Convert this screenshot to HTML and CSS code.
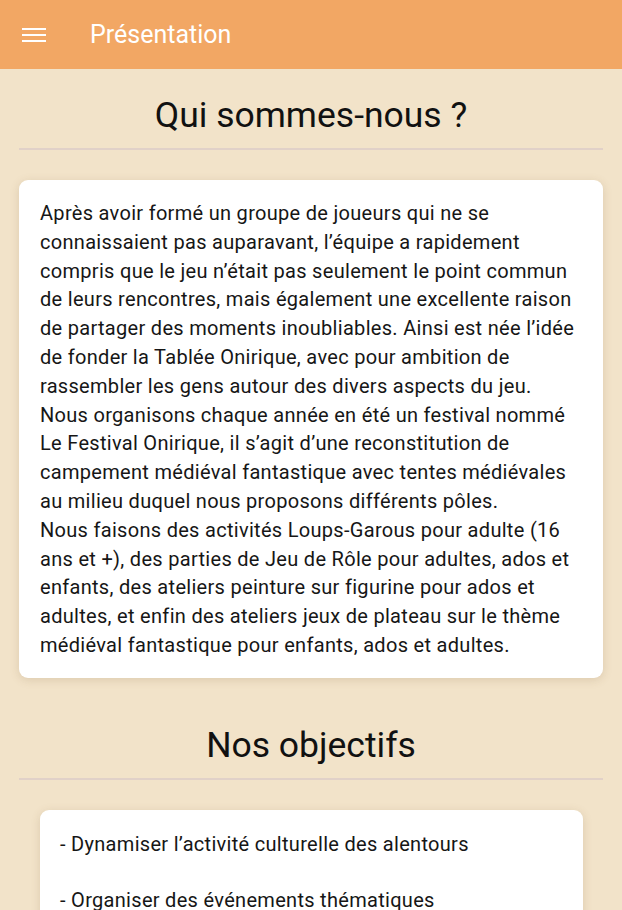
FILE: index.html
```html
<!DOCTYPE html>
<html lang="fr">
<head>
<meta charset="utf-8">
<title>Présentation</title>
<link rel="stylesheet" href="styles.css">
</head>
<body>
<header class="topbar">
  <button class="menu-btn" aria-label="Menu">
    <svg width="24" height="24" viewBox="0 0 24 24"><path d="M0 5h24v2H0zM0 11h24v2H0zM0 17h24v2H0z" fill="#fff"/></svg>
  </button>
  <h1 class="topbar-title">Présentation</h1>
</header>
<main class="page">
  <section class="section">
    <h2 class="section-title">Qui sommes-nous ?</h2>
    <div class="divider"></div>
    <div class="card card-wide">
      <p class="card-text">Après avoir formé un groupe de joueurs qui ne se connaissaient pas auparavant, l’équipe a rapidement compris que le jeu n’était pas seulement le point commun de leurs rencontres, mais également une excellente raison de partager des moments inoubliables. Ainsi est née l’idée de fonder la Tablée Onirique, avec pour ambition de rassembler les gens autour des divers aspects du jeu.<br>Nous organisons chaque année en été un festival nommé Le Festival Onirique, il s’agit d’une reconstitution de campement médiéval fantastique avec tentes médiévales au milieu duquel nous proposons différents pôles.<br>Nous faisons des activités Loups-Garous pour adulte (16 ans et +), des parties de Jeu de Rôle pour adultes, ados et enfants, des ateliers peinture sur figurine pour ados et adultes, et enfin des ateliers jeux de plateau sur le thème médiéval fantastique pour enfants, ados et adultes.</p>
    </div>
  </section>
  <section class="section section-second">
    <h2 class="section-title">Nos objectifs</h2>
    <div class="divider"></div>
    <div class="card card-narrow">
      <p class="card-text">- Dynamiser l’activité culturelle des alentours</p>
      <p class="card-text">- Organiser des événements thématiques</p>
    </div>
  </section>
</main>
</body>
</html>
```
FILE: styles.css
```css
* { box-sizing: border-box; }
html, body {
  margin: 0;
  padding: 0;
  background: #F2E3C9;
  font-family: Roboto, "Noto Sans", sans-serif;
  color: #1c1c1c;
}
body { height: 910px; overflow: hidden; }
.topbar {
  height: 69px;
  background: #F2A764;
  display: flex;
  align-items: center;
  padding-left: 22px;
}
.menu-btn {
  background: none;
  border: 0;
  padding: 0;
  width: 24px;
  height: 24px;
  display: flex;
  align-items: center;
  justify-content: center;
}
.topbar-title {
  margin: 0 0 0 44px;
  color: #fff;
  font-size: 25px;
  font-weight: 400;
  line-height: 1;
}
.page {
  padding: 0 19px;
}
.section { padding-top: 26px; }
.section-second { padding-top: 47px; }
.section-title {
  margin: 0;
  font-size: 35.5px;
  line-height: 40px;
  font-weight: 400;
  text-align: center;
  color: #111;
}
.divider {
  height: 2px;
  background: #E1D1C8;
  margin-top: 13px;
}
.card {
  background: #fff;
  border-radius: 9px;
  box-shadow: 0 2px 10px rgba(120, 90, 50, 0.18);
  margin-top: 30px;
  padding: 19px 21px 18px;
  display: flex;
  flex-direction: column;
  gap: 27px;
}
.card-narrow { margin-left: 21px; margin-right: 20px; padding: 20px 20px; }
.card-text {
  margin: 0;
  font-size: 20px;
  letter-spacing: 0.3px;
  line-height: 28.8px;
  color: #161616;
}
```
